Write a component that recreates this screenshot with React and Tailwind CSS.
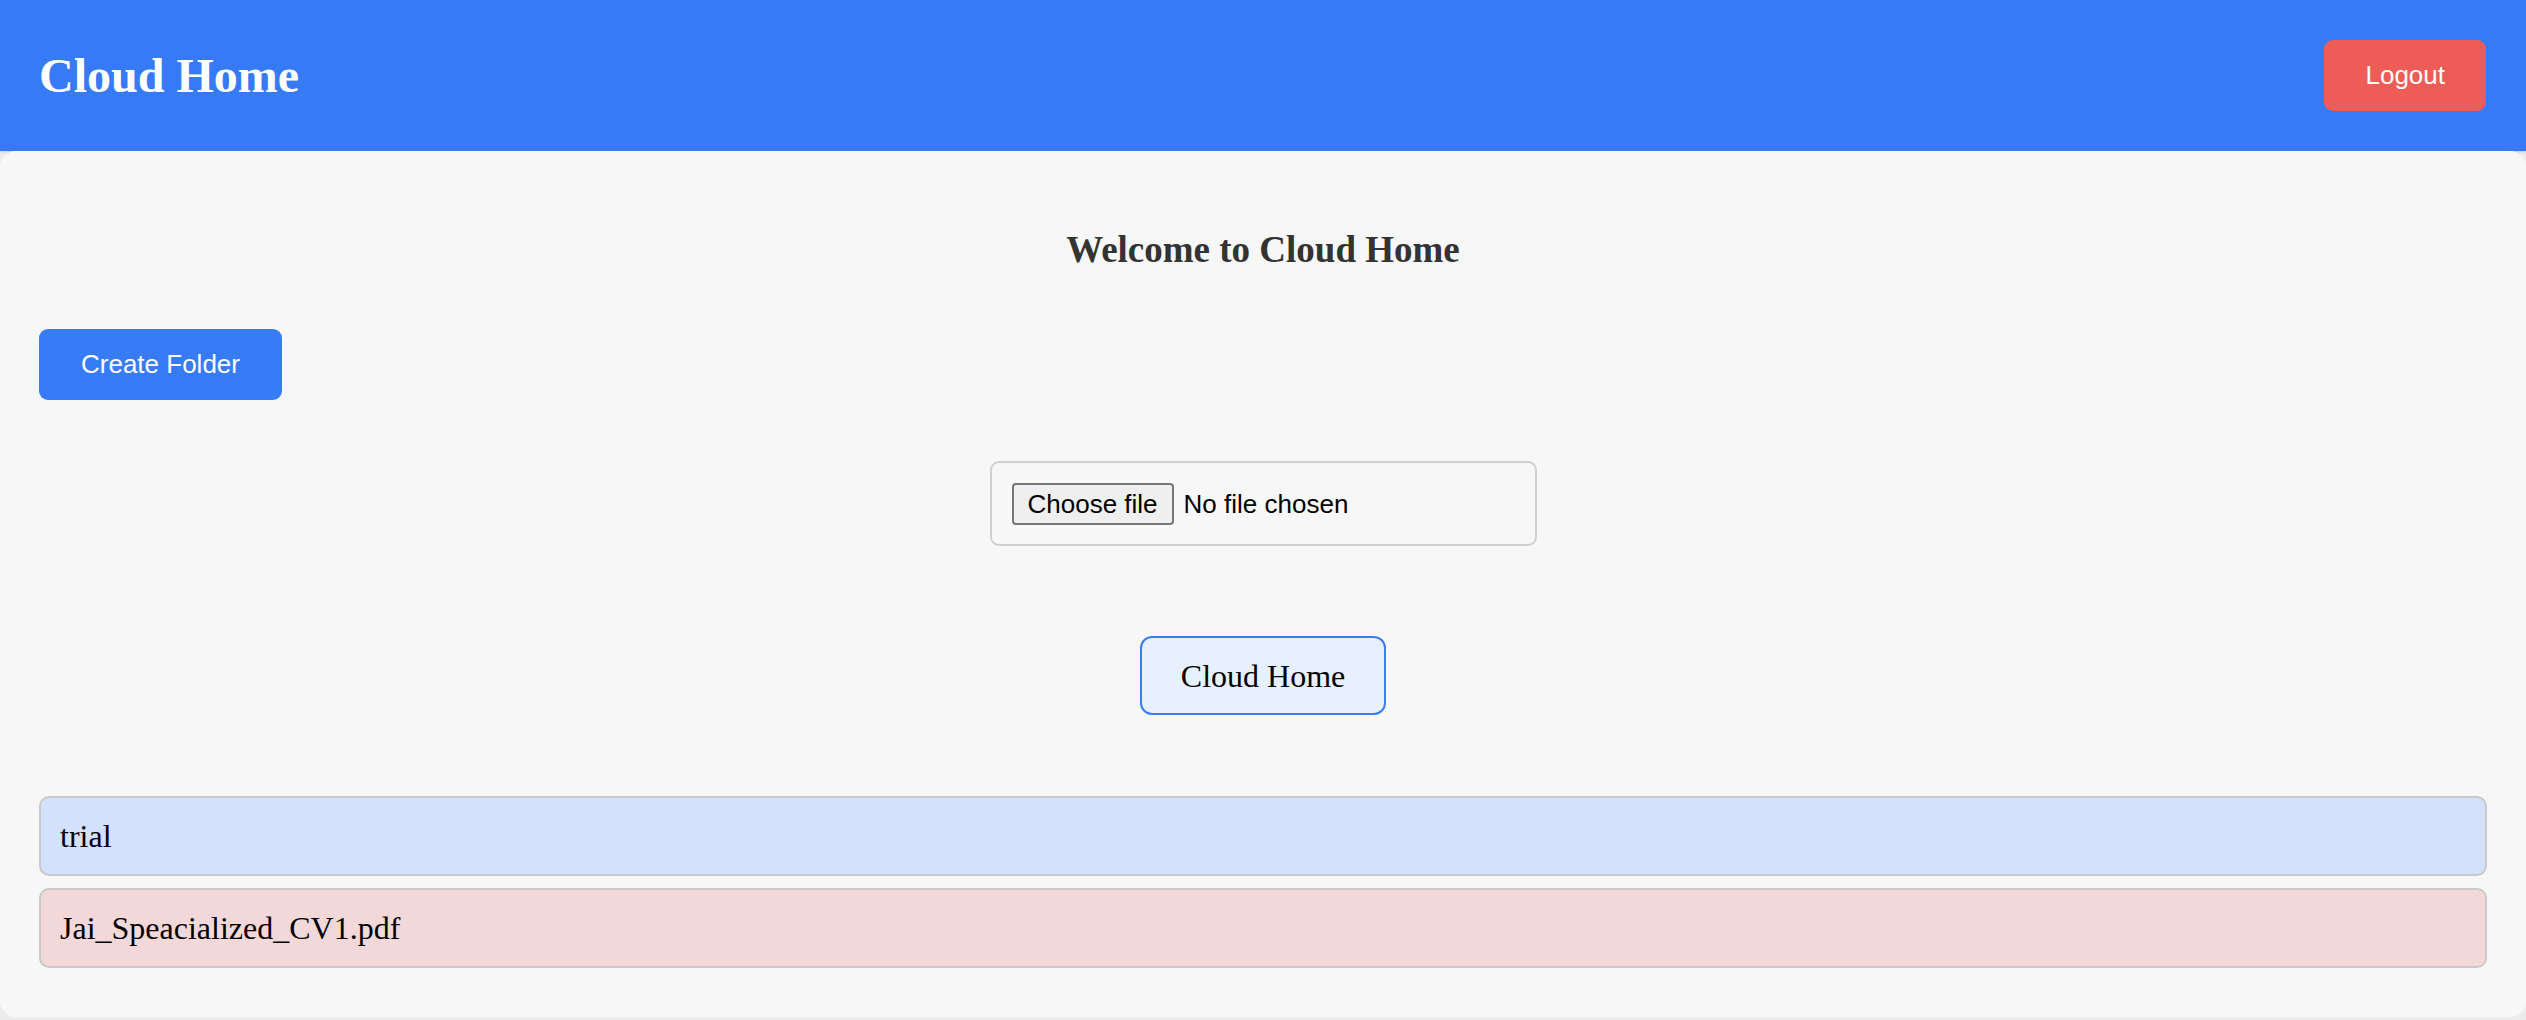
import React, { useState } from 'react';

const items = [
    { name: 'trial', type: 'folder' },
    { name: 'Jai_Speacialized_CV1.pdf', type: 'file' },
];

const App = () => {
    const [fileName, setFileName] = useState('');

    return (
        <div className="min-h-screen bg-[#ececec] font-['Liberation_Serif',serif]">
            {/* Header */}
            <header className="h-[151px] bg-[#377af6] flex items-center justify-between pl-[39px] pr-[40px] shadow-sm">
                <h1 className="text-[48px] leading-none font-bold text-white">Cloud Home</h1>
                <button className="h-[71px] px-[41px] rounded-[9px] bg-[#ee5c58] text-white text-[26px] font-['Liberation_Sans',Arial,sans-serif]">
                    Logout
                </button>
            </header>

            {/* Body */}
            <main className="bg-[#f7f7f7] rounded-[16px] px-[39px] pt-[80px] pb-[49px] flex flex-col">
                <h2 className="text-center text-[37px] leading-none font-bold text-[#333]">Welcome to Cloud Home</h2>

                <button className="self-start mt-[61px] h-[71px] px-[42px] rounded-[9px] bg-[#387bf6] text-white text-[26px] font-['Liberation_Sans',Arial,sans-serif]">
                    Create Folder
                </button>

                <label className="self-center mt-[61px] w-[547px] h-[85px] px-[20px] flex items-center gap-[10px] border-2 border-[#d0d0d0] rounded-[9px] cursor-pointer font-['Liberation_Sans',Arial,sans-serif] text-[26px] text-black">
                    <input
                        type="file"
                        className="hidden"
                        onChange={(e) => setFileName(e.target.files?.[0]?.name || '')}
                    />
                    <span className="h-[42px] px-[14px] flex items-center bg-[#efefef] border-2 border-[#767676] rounded-[4px] leading-none">
                        Choose file
                    </span>
                    <span className="leading-none">{fileName || 'No file chosen'}</span>
                </label>

                <div className="self-center mt-[90px] h-[79px] px-[39px] flex items-center border-2 border-[#3b7df3] rounded-[12px] bg-[#e8f0fd] text-[32px] leading-none text-black">
                    Cloud Home
                </div>

                <div className="mt-[81px] flex flex-col gap-[12px]">
                    {items.map((item) => (
                        <div
                            key={item.name}
                            className={`h-[80px] px-[19px] flex items-center border-2 border-[#c9c9c9] rounded-[10px] text-[32px] leading-none text-black ${item.type === 'folder' ? 'bg-[#d3e1fb]' : 'bg-[#f3d8da]'}`}
                        >
                            {item.name}
                        </div>
                    ))}
                </div>
            </main>
        </div>
    );
};

export default App;
